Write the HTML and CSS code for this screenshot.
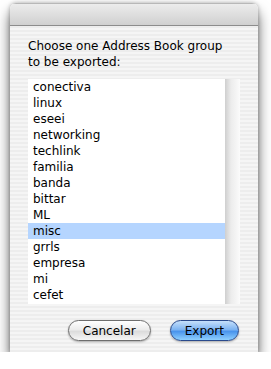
FILE: index.html
```html
<!DOCTYPE html>
<html lang="en">

<head>
  <meta charset="UTF-8" />
  <title>Export Group</title>
  <link rel="stylesheet" href="styles.css">
</head>

<body>
  <div class="sheet">
    <div class="titlebar"></div>
    <div class="sheet-body">
      <p class="prompt">Choose one Address Book group to be exported:</p>
      <div class="list-box">
        <ul class="group-list">
          <li>conectiva</li>
          <li>linux</li>
          <li>eseei</li>
          <li>networking</li>
          <li>techlink</li>
          <li>familia</li>
          <li>banda</li>
          <li>bittar</li>
          <li>ML</li>
          <li class="selected">misc</li>
          <li>grrls</li>
          <li>empresa</li>
          <li>mi</li>
          <li>cefet</li>
        </ul>
        <div class="scroller"></div>
      </div>
      <div class="buttons">
        <button class="aqua-btn">Cancelar</button>
        <button class="aqua-btn default">Export</button>
      </div>
    </div>
  </div>
</body>

</html>
```

FILE: styles.css
```css
/* General Styles */
body {
  margin: 0;
  padding: 3px 0 0 10px;
  background: #ffffff;
  font-family: 'DejaVu Sans', 'Liberation Sans', sans-serif;
  font-size: 12px;
  color: #000;
}

/* Sheet window */
.sheet {
  width: 248px;
  height: 349px;
  display: flex;
  flex-direction: column;
  border-radius: 6px 6px 0 0;
  box-shadow: 0 9px 14px rgba(0, 0, 0, 0.6), 0 0 4px rgba(0, 0, 0, 0.3);
  overflow: hidden;
}

.titlebar {
  height: 21px;
  border-top: 1px solid #b8b8b8;
  background: linear-gradient(#ececec, #d0d0d0);
  border-bottom: 1px solid #8c8c8c;
}

.sheet-body {
  flex: 1;
  display: flex;
  flex-direction: column;
  padding: 0 18px 0 18px;
  background: repeating-linear-gradient(#ededed 0, #ededed 2px, #f5f5f5 2px, #f5f5f5 4px);
}

.prompt {
  margin: 12px 0 0;
  line-height: 16px;
  width: 208px;
}

/* List */
.list-box {
  margin-top: 9px;
  height: 225px;
  display: flex;
}

.group-list {
  flex: 1;
  list-style: none;
  margin: 0;
  padding: 0;
  background: #fff;
}

.group-list li {
  height: 16px;
  line-height: 16px;
  padding-left: 5px;
}

.group-list li.selected {
  background: #b5d5ff;
}

.scroller {
  width: 15px;
  background: linear-gradient(90deg, #cfcfcf, #ececec 40%, #fbfbfb);
}

/* Buttons */
.buttons {
  display: flex;
  justify-content: flex-end;
  gap: 19px;
  margin-top: 16px;
  padding-right: 1px;
}

.aqua-btn {
  height: 21px;
  padding: 0 14px;
  font-family: inherit;
  font-size: 12px;
  border-radius: 11px;
  border: 1px solid #6e6e6e;
  background: linear-gradient(#ffffff 0%, #ececec 45%, #dcdcdc 55%, #f6f6f6 100%);
  box-shadow: 0 1px 2px rgba(0, 0, 0, 0.3);
  color: #000;
}

.aqua-btn.default {
  border-color: #2a4a8c;
  background: linear-gradient(#c6e0fb 0%, #7eb4f2 45%, #4a94ec 55%, #8fd0ff 100%);
}
```
